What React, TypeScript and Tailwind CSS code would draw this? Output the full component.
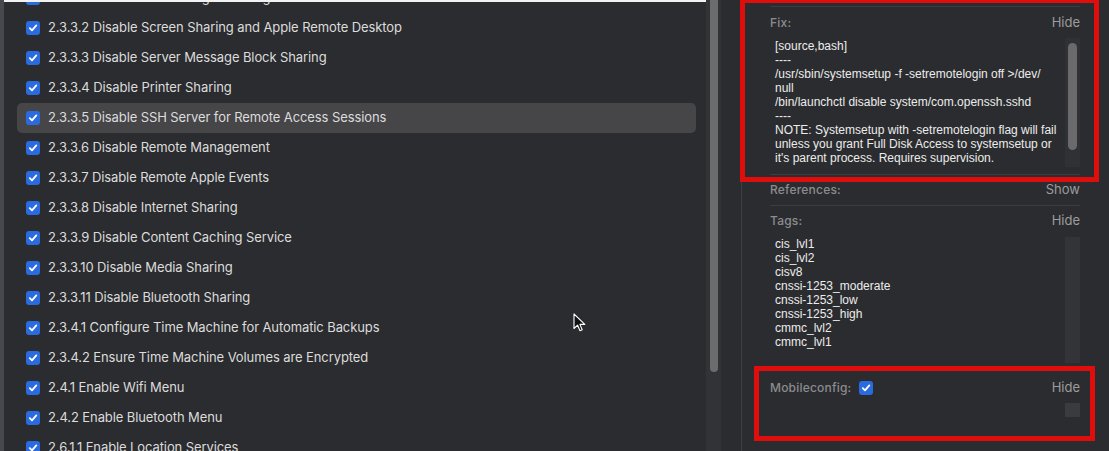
import React from "react";

const rows = [
  "2.3.3.1 Disable Remote Login Sharing",
  "2.3.3.2 Disable Screen Sharing and Apple Remote Desktop",
  "2.3.3.3 Disable Server Message Block Sharing",
  "2.3.3.4 Disable Printer Sharing",
  "2.3.3.5 Disable SSH Server for Remote Access Sessions",
  "2.3.3.6 Disable Remote Management",
  "2.3.3.7 Disable Remote Apple Events",
  "2.3.3.8 Disable Internet Sharing",
  "2.3.3.9 Disable Content Caching Service",
  "2.3.3.10 Disable Media Sharing",
  "2.3.3.11 Disable Bluetooth Sharing",
  "2.3.4.1 Configure Time Machine for Automatic Backups",
  "2.3.4.2 Ensure Time Machine Volumes are Encrypted",
  "2.4.1 Enable Wifi Menu",
  "2.4.2 Enable Bluetooth Menu",
  "2.6.1.1 Enable Location Services",
];

const fixLines = [
  "[source,bash]",
  "----",
  "/usr/sbin/systemsetup -f -setremotelogin off >/dev/",
  "null",
  "/bin/launchctl disable system/com.openssh.sshd",
  "----",
  "NOTE: Systemsetup with -setremotelogin flag will fail",
  "unless you grant Full Disk Access to systemsetup or",
  "it's parent process. Requires supervision.",
];

const tags = [
  "cis_lvl1",
  "cis_lvl2",
  "cisv8",
  "cnssi-1253_moderate",
  "cnssi-1253_low",
  "cnssi-1253_high",
  "cmmc_lvl2",
  "cmmc_lvl1",
];

function Check() {
  return (
    <div className="w-[14px] h-[14px] rounded-[3px] bg-[#2a6be0] flex items-center justify-center shrink-0">
      <svg width="10" height="10" viewBox="0 0 10 10">
        <path d="M1.8 5.2 L4 7.4 L8.3 2.4" fill="none" stroke="white" strokeWidth="1.8" strokeLinecap="round" strokeLinejoin="round" />
      </svg>
    </div>
  );
}

function SectionHeader({ label, action, extra }: { label: string; action: string; extra?: React.ReactNode }) {
  return (
    <div className="flex items-center justify-between h-[30px] font-['Inter',sans-serif]">
      <div className="flex items-center gap-[8px]">
        <span className="text-[12px] font-medium text-[#8b8c8e] tracking-[0.2px]">{label}</span>
        {extra}
      </div>
      <span className="text-[13px] text-[#9c9c9e]">{action}</span>
    </div>
  );
}

export default function App() {
  return (
    <div className="relative w-[1109px] h-[451px] overflow-hidden flex bg-[#2b2c2f]">
      {/* far left window strip */}
      <div className="w-[4px] h-full bg-[#46484d] shrink-0" />
      {/* left pane */}
      <div className="flex flex-col w-[702px] shrink-0">
        <div className="h-[2px] bg-[#f2f2f2] shrink-0" />
        <div className="flex-1 overflow-hidden">
          <div className="mt-[-19px] flex flex-col pl-[13px] pr-[10px] font-['Inter',sans-serif]">
            {rows.map((r, i) => (
              <div
                key={i}
                className={`h-[30px] flex items-center gap-[8px] pl-[9px] rounded-[5px] ${i === 4 ? "bg-[#464648]" : ""}`}
              >
                <Check />
                <span className="text-[13px] text-[#dcdcdc] tracking-[-0.1px] whitespace-nowrap">{r}</span>
              </div>
            ))}
          </div>
        </div>
      </div>
      {/* scrollbar */}
      <div className="w-[15px] h-full bg-[#323336] shrink-0 pl-[4px]">
        <div className="w-[8px] h-[372px] bg-[#6c6c6e] rounded-b-[4px]" />
      </div>
      <div className="w-[20px] shrink-0 bg-[#2b2c2f]" />
      <div className="w-px h-full bg-[#3e3f42] shrink-0" />
      {/* right pane */}
      <div className="flex-1 pl-[28px] pr-[29px] pt-[6px]">
        <div className="h-px bg-[#3c3d40]" />
        <div className="mt-[1px]">
          <SectionHeader label="Fix:" action="Hide" />
        </div>
        <div className="flex h-[129px]">
          <div className="flex-1 pl-[5px] pt-[1px] font-['Liberation_Sans',Arial,sans-serif] text-[12px] leading-[14px] text-[#ececec]">
            {fixLines.map((l, i) => (
              <div key={i} className="whitespace-nowrap">{l}</div>
            ))}
          </div>
          <div className="w-[15px] h-full bg-[#303134] pl-[3px] pt-[5px]">
            <div className="w-[9px] h-[107px] rounded-full bg-[#6a6a6c]" />
          </div>
        </div>
        <div className="h-[7px]" />
        <div className="h-px bg-[#3c3d40]" />
        <SectionHeader label="References:" action="Show" />
        <div className="h-px bg-[#3c3d40]" />
        <SectionHeader label="Tags:" action="Hide" />
        <div className="flex h-[126px] mt-[1px]">
          <div className="flex-1 pl-[5px] pt-[0px] font-['Liberation_Sans',Arial,sans-serif] text-[12px] leading-[14px] text-[#ececec]">
            {tags.map((t, i) => (
              <div key={i} className="whitespace-nowrap">{t}</div>
            ))}
          </div>
          <div className="w-[15px] h-full bg-[#333437]" />
        </div>
        <div className="h-[10px]" />
        <SectionHeader label="Mobileconfig:" action="Hide" extra={<Check />} />
        <div className="flex justify-end mt-[0px]">
          <div className="w-[15px] h-[14px] bg-[#3a3b3e]" />
        </div>
      </div>

      {/* red annotation boxes */}
      <div className="absolute left-[740px] top-[-2px] w-[359px] h-[184px] border-[5px] border-[#e00d0d] pointer-events-none" />
      <div className="absolute left-[754px] top-[366px] w-[341px] h-[75px] border-[5px] border-[#e00d0d] pointer-events-none" />

      {/* mouse cursor */}
      <svg className="absolute left-[573px] top-[313px]" width="14" height="20" viewBox="0 0 14 20">
        <path d="M1 1 L1 15.5 L4.6 12.2 L7 17.8 L9.2 16.8 L6.9 11.4 L11.8 11.4 Z" fill="#111" stroke="#fff" strokeWidth="1.1" strokeLinejoin="round" />
      </svg>
    </div>
  );
}
